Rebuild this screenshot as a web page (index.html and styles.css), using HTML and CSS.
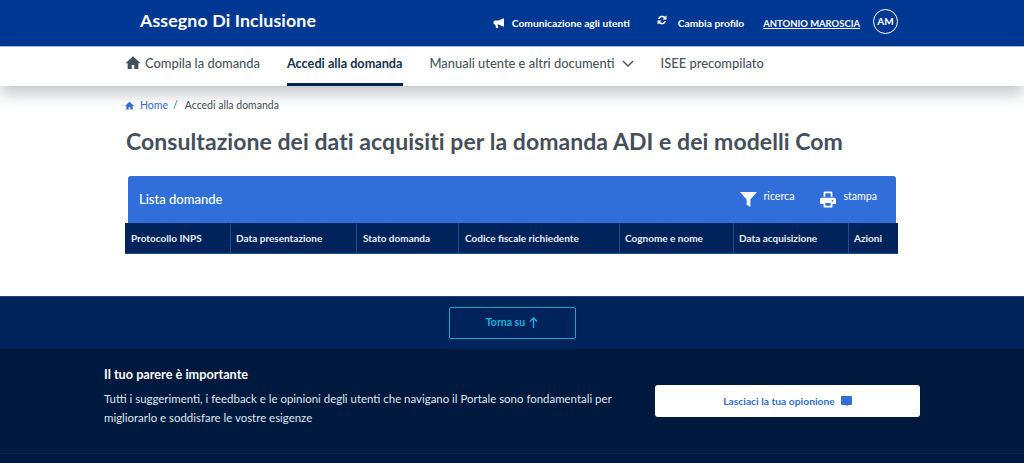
FILE: index.html
```html
<!DOCTYPE html>
<html lang="it">
<head>
<meta charset="utf-8">
<title>Assegno Di Inclusione</title>
<link rel="stylesheet" href="styles.css">
</head>
<body>
<header class="topbar">
  <div class="brand">Assegno Di Inclusione</div>
  <div class="tools">
    <a class="tool tool-com"><svg class="ic12" viewBox="0 0 24 24"><path d="M22 3v16h-2l-9-4H9l1.500 7H6L4.500 15H4a3 3 0 0 1-3-3v-2a3 3 0 0 1 3-3h7l9-4z"/></svg>Comunicazione agli utenti</a>
    <a class="tool tool-cam"><svg class="ic12 up" viewBox="0 0 24 24"><path d="M4 10a8.500 8.500 0 0 1 14-4.500L21 3v8h-8l3-3a5.500 5.500 0 0 0-9 2zM20 14a8.500 8.500 0 0 1-14 4.500L3 21v-8h8l-3 3a5.500 5.500 0 0 0 9-2z"/></svg>Cambia profilo</a>
    <a class="user">ANTONIO MAROSCIA</a>
    <span class="avatar">AM</span>
  </div>
</header>
<nav class="mainnav">
  <a class="navitem"><svg class="homeic" viewBox="0 0 24 24"><path d="M12 2 0 13h3.500v9.500H10V16h4v6.500h6.500V13H24z"/></svg>Compila la domanda</a>
  <a class="navitem active">Accedi alla domanda</a>
  <a class="navitem">Manuali utente e altri documenti<svg class="chev" viewBox="0 0 14 8"><path d="M1 1l6 6 6-6"/></svg></a>
  <a class="navitem">ISEE precompilato</a>
</nav>
<main class="content">
  <div class="crumbs">
    <svg class="crumbhome" viewBox="0 0 24 24"><path d="M12 2 0 13h3.500v9.500H10V16h4v6.500h6.500V13H24z"/></svg>
    <a class="crumblink">Home</a><span class="sep">/</span><span class="crumbcur">Accedi alla domanda</span>
  </div>
  <h1 class="title">Consultazione dei dati acquisiti per la domanda ADI e dei modelli Com</h1>
  <section class="card">
    <div class="cardhead">
      <div class="cardtitle">Lista domande</div>
      <div class="actions">
        <a class="action"><svg class="filter" viewBox="0 0 18 16"><path d="M0 0h18l-7 8v8l-4-2.500V8z"/></svg>ricerca</a>
        <a class="action"><svg class="print" viewBox="0 0 18 18"><path d="M4 6V1.500A1.500 1.500 0 0 1 5.500 0h7A1.500 1.500 0 0 1 14 1.500V6h-2V2H6v4zM2 7h14a2 2 0 0 1 2 2v5h-4v4H4v-4H0V9a2 2 0 0 1 2-2zm4 6v3h6v-3zm8-3.500a1 1 0 1 0 0 2 1 1 0 0 0 0-2z" fill-rule="evenodd"/></svg>stampa</a>
      </div>
    </div>
    <div class="thead">
      <div class="th w1">Protocollo INPS</div>
      <div class="th w2">Data presentazione</div>
      <div class="th w3">Stato domanda</div>
      <div class="th w4">Codice fiscale richiedente</div>
      <div class="th w5">Cognome e nome</div>
      <div class="th w6">Data acquisizione</div>
      <div class="th w7">Azioni</div>
    </div>
  </section>
</main>
<div class="backtop">
  <a class="backbtn">Torna su<svg class="arrow" viewBox="0 0 10 12"><path d="M5 12V1M1 5l4-4 4 4"/></svg></a>
</div>
<footer class="feedback">
  <div class="fbrow">
    <div class="fbtext">
      <h2 class="fbtitle">Il tuo parere è importante</h2>
      <p class="fbbody">Tutti i suggerimenti, i feedback e le opinioni degli utenti che navigano il Portale sono fondamentali per migliorarlo e soddisfare le vostre esigenze</p>
    </div>
    <a class="fbbtn">Lasciaci la tua opionione<svg class="bubble" viewBox="0 0 11 11"><path d="M1 0h9a1 1 0 0 1 1 1v7a1 1 0 0 1-1 1H7l-1.500 2V9H1a1 1 0 0 1-1-1V1a1 1 0 0 1 1-1z"/></svg></a>
  </div>
</footer>
</body>
</html>
```
FILE: styles.css
```css
* { box-sizing: border-box; }
html, body { margin: 0; padding: 0; }
body {
  height: 463px;
  overflow: hidden;
  font-family: "Lato", "Noto Sans", sans-serif;
  background: #fff;
  color: #454f5a;
}
svg { display: block; flex: none; }

.topbar {
  height: 47px;
  background: #003893;
  border-bottom: 1px solid #a9bfe0;
  display: flex;
  align-items: center;
  padding: 0 126px 2px 140px;
  color: #fff;
}
.brand { font-size: 17.800px; font-weight: 700; letter-spacing: .1px; margin-bottom: 4px; }
.tools { margin-left: auto; display: flex; align-items: center; font-size: 10.250px; font-weight: 700; }
.tool { display: flex; align-items: center; margin-top: 2px; white-space: nowrap; }
.tool-com { margin-right: 26px; }
.tool-cam { margin-right: 19px; }
.ic12 { width: 12px; height: 12px; fill: #fff; margin-right: 7px; }
.ic12.up { margin-right: 10px; transform: translateY(-3px); }
.user { text-decoration: underline; font-weight: 700; margin-right: 13px; margin-top: 2px; font-size: 9.450px; white-space: nowrap; }
.avatar {
  width: 25px; height: 25px;
  border: 1.500px solid #fff;
  border-radius: 50%;
  display: flex; align-items: center; justify-content: center;
  font-size: 10px;
  margin-top: -2px;
}

.mainnav {
  height: 39px;
  background: #fff;
  display: flex;
  padding-left: 125px;
  box-shadow: 0 8px 16px rgba(40, 50, 65, .28);
  position: relative;
  font-size: 12.900px;
  font-weight: 500;
}
.navitem {
  display: flex; align-items: center;
  height: 39px;
  margin-right: 27px;
  border-bottom: 3px solid transparent;
  padding-bottom: 5px;
  color: #4a5560;
  white-space: nowrap;
}
.navitem.active { color: #17324d; font-weight: 700; font-size: 12.700px; border-bottom-color: #00235c; }
.homeic { width: 16px; height: 15px; fill: #454f5a; margin-right: 4px; }
.chev { width: 12px; height: 7px; fill: none; stroke: #4a5560; stroke-width: 1.600; margin-left: 7px; margin-top: 1px; }

.content { height: 210px; padding: 13px 0 0 125px; }
.crumbs { display: flex; align-items: center; height: 12px; font-size: 10.500px; }
.crumbhome { width: 9px; height: 9px; fill: #3170d6; margin-right: 6px; }
.crumblink { color: #3170d6; }
.sep { color: #3170d6; margin: 0 7px 0 5px; }
.crumbcur { color: #454f5a; }
.title {
  margin: 15px 0 0 1px;
  font-size: 23px;
  line-height: 30px;
  font-weight: 700;
  color: #454f5a;
  letter-spacing: .06px;
  white-space: nowrap;
}
.card { margin-top: 20px; width: 773px; }
.cardhead {
  margin-left: 3px;
  width: 768px;
  height: 47px;
  background: #306fd9;
  border-radius: 3px 3px 0 0;
  display: flex;
  color: #fff;
  padding: 0 19px 0 11px;
  justify-content: space-between;
}
.cardtitle { font-size: 13px; font-weight: 500; margin-top: 15px; }
.actions { display: flex; gap: 26px; padding-top: 13px; }
.action { display: flex; align-items: flex-start; font-size: 10.600px; gap: 7px; line-height: 14px; }
.filter { width: 17px; height: 15px; fill: #fff; margin-top: 3px; }
.print { width: 16px; height: 17px; fill: #fff; margin-top: 2px; }
.thead {
  display: flex;
  height: 31px;
  background: #00235c;
  border-bottom: 1px solid #1d4c96;
  color: #e8edf5;
  font-size: 10px;
  font-weight: 700;
  width: 773px;
}
.th {
  display: flex; align-items: center;
  padding-left: 5px;
  border-right: 1px solid #1d4c96;
  white-space: nowrap;
}
.th:last-child { border-right: 0; }
.w1 { width: 106px; padding-left: 6px; }
.w2 { width: 126px; }
.w3 { width: 102px; padding-left: 6px; }
.w4 { width: 161px; padding-left: 6px; }
.w5 { width: 114px; }
.w6 { width: 115px; }
.w7 { width: 49px; }

.backtop {
  height: 53px;
  background: #00235c;
  border-top: 1px solid #2a3f6e;
  display: flex; justify-content: center;
  padding-top: 10px;
}
.backbtn {
  width: 127px; height: 32px;
  border: 1.500px solid #12a5c9;
  border-radius: 2px;
  color: #12b3dc;
  font-size: 10.500px;
  font-weight: 700;
  display: flex; align-items: center; justify-content: center;
  gap: 4px;
  padding-bottom: 2px;
}
.arrow { width: 9px; height: 11px; fill: none; stroke: #12b3dc; stroke-width: 1.500; }

.feedback {
  height: 114px;
  background: #00193f;
  padding-top: 18px;
  position: relative;
}
.feedback::after {
  content: "";
  position: absolute; left: 0; right: 0; top: 104px;
  height: 1px;
  background: #02284f;
}
.fbrow { display: flex; padding-left: 104px; }
.fbtext { width: 551px; color: #fff; }
.fbtitle { margin: 0; font-size: 12.700px; line-height: 15px; font-weight: 700; }
.fbbody { margin: 7px 0 0; font-size: 11.450px; line-height: 19px; color: #dfe5ee; width: 520px; }
.fbbtn {
  width: 265px; height: 32px;
  margin-top: 18px;
  background: #fff;
  border-radius: 3px;
  color: #306fd9;
  font-size: 10.300px;
  font-weight: 700;
  display: flex; align-items: center; justify-content: center;
  gap: 6px;
}
.bubble { width: 11px; height: 11px; fill: #306fd9; }
```
